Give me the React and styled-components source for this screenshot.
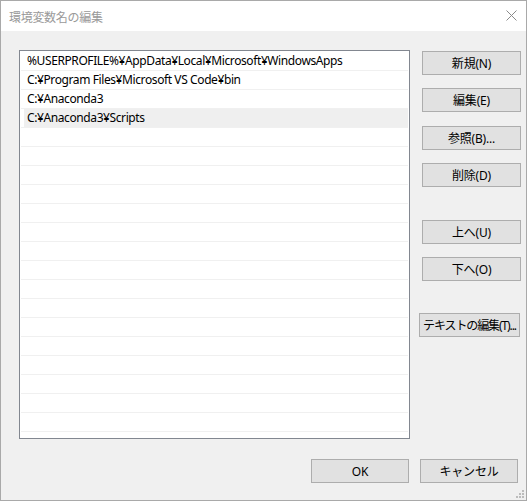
import React from "react";
import styled, { createGlobalStyle } from "styled-components";

const GlobalStyle = createGlobalStyle`
  html, body {
    margin: 0;
    padding: 0;
    background: #f0f0f0;
  }
  * {
    box-sizing: border-box;
  }
`;

const uiFont = `"Noto Sans", "Noto Sans CJK JP", sans-serif`;

const Window = styled.div`
  position: relative;
  width: 527px;
  height: 501px;
  border: 1px solid #a9a9a9;
  background: #f0f0f0;
  display: flex;
  flex-direction: column;
  font-family: ${uiFont};
  font-size: 12px;
  color: #000;
`;

const TitleBar = styled.div`
  height: 30px;
  background: #fff;
  display: flex;
  align-items: center;
  justify-content: space-between;
  padding: 0 9px 0 8px;
  flex-shrink: 0;
`;

const Title = styled.span`
  font-family: "Noto Sans CJK JP", sans-serif;
  font-size: 12px;
  color: #9a9a9a;
  letter-spacing: -0.3px;
`;

const CloseIcon = styled.svg`
  width: 11px;
  height: 11px;
  margin-bottom: 1px;
`;

const Main = styled.div`
  display: flex;
  padding: 19px 0 0 18px;
`;

const ListBox = styled.div`
  width: 391px;
  height: 389px;
  border: 1px solid #828790;
  background: #fff;
  padding-top: 1px;
  overflow: hidden;
`;

const Row = styled.div`
  height: 19px;
  margin: 0 1px;
  border-bottom: 1px solid #f0f0f0;
  display: flex;
`;

const Cell = styled.div`
  flex: 1;
  display: flex;
  align-items: center;
  margin-left: ${(p) => (p.$selected ? "3px" : "0")};
  padding-left: ${(p) => (p.$selected ? "3px" : "6px")};
  background: ${(p) => (p.$selected ? "#efefef" : "transparent")};
  white-space: nowrap;
  font-size: 12px;
  line-height: 18px;
  letter-spacing: -0.4px;
`;

const ButtonColumn = styled.div`
  display: flex;
  flex-direction: column;
  margin-left: 12px;
  padding-top: 1px;
`;

const Button = styled.button`
  width: ${(p) => p.$width || 99}px;
  height: 24px;
  margin-top: ${(p) => p.$top || 0}px;
  margin-left: ${(p) => p.$shift || 0}px;
  background: #e1e1e1;
  border: 1px solid #adadad;
  border-radius: 0;
  padding: 0;
  font-family: ${uiFont};
  font-size: 12px;
  letter-spacing: ${(p) => (p.$tight ? "-1.1px" : "-0.2px")};
  color: #000;
  white-space: nowrap;
  display: flex;
  align-items: center;
  justify-content: center;
`;

const Footer = styled.div`
  display: flex;
  justify-content: flex-end;
  gap: 11px;
  padding: 20px 8px 0 0;
`;

const Grip = styled.svg`
  position: absolute;
  right: 2px;
  bottom: 2px;
  width: 8px;
  height: 8px;
`;

const paths = [
  "%USERPROFILE%¥AppData¥Local¥Microsoft¥WindowsApps",
  "C:¥Program Files¥Microsoft VS Code¥bin",
  "C:¥Anaconda3",
  "C:¥Anaconda3¥Scripts",
];

const ROWS = 21;

export default function App() {
  const rows = Array.from({ length: ROWS }, (_, i) => paths[i] || "");

  return (
    <>
      <GlobalStyle />
      <Window>
        <TitleBar>
          <Title>環境変数名の編集</Title>
          <CloseIcon viewBox="0 0 11 11">
            <path d="M0.5 0.5 L10.5 10.5 M10.5 0.5 L0.5 10.5" stroke="#8a8a8a" strokeWidth="1" fill="none" />
          </CloseIcon>
        </TitleBar>

        <Main>
          <ListBox>
            {rows.map((text, i) => (
              <Row key={i}>
                <Cell $selected={i === 3}>{text}</Cell>
              </Row>
            ))}
          </ListBox>

          <ButtonColumn>
            <Button>新規(N)</Button>
            <Button $top={13}>編集(E)</Button>
            <Button $top={14}>参照(B)...</Button>
            <Button $top={13}>削除(D)</Button>
            <Button $top={33}>上へ(U)</Button>
            <Button $top={13}>下へ(O)</Button>
            <Button $top={32} $shift={-3} $width={101} $tight>テキストの編集(T)...</Button>
          </ButtonColumn>
        </Main>

        <Footer>
          <Button $width={98}>OK</Button>
          <Button $width={98}>キャンセル</Button>
        </Footer>

        <Grip viewBox="0 0 8 8">
          <rect x="6" y="0" width="2" height="2" fill="#bcbcbc" />
          <rect x="3" y="3" width="2" height="2" fill="#bcbcbc" />
          <rect x="6" y="3" width="2" height="2" fill="#bcbcbc" />
          <rect x="0" y="6" width="2" height="2" fill="#bcbcbc" />
          <rect x="3" y="6" width="2" height="2" fill="#bcbcbc" />
          <rect x="6" y="6" width="2" height="2" fill="#bcbcbc" />
        </Grip>
      </Window>
    </>
  );
}
